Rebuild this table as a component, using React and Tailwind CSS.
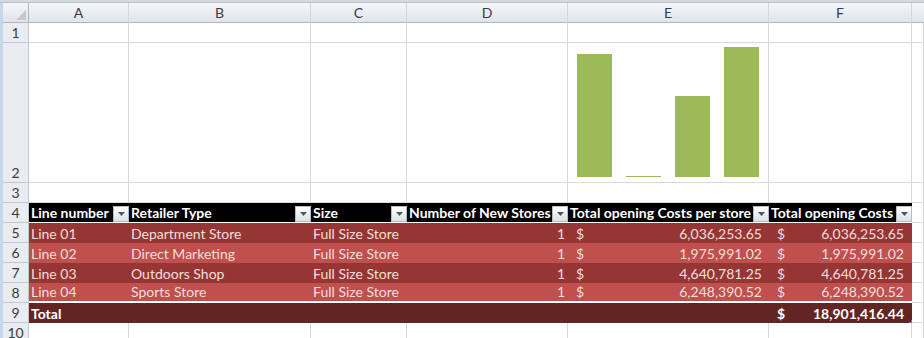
const cols = ['w-[100px]', 'w-[182px]', 'w-[96px]', 'w-[161px]', 'w-[201px]', 'w-[143px]'];
const letters = ['A', 'B', 'C', 'D', 'E', 'F'];

const rows = [
  { n: 5, line: 'Line 01', type: 'Department Store', per: '6,036,253.65', bg: 'bg-[#963634]' },
  { n: 6, line: 'Line 02', type: 'Direct Marketing', per: '1,975,991.02', bg: 'bg-[#c0504d]' },
  { n: 7, line: 'Line 03', type: 'Outdoors Shop', per: '4,640,781.25', bg: 'bg-[#963634]' },
  { n: 8, line: 'Line 04', type: 'Sports Store', per: '6,248,390.52', bg: 'bg-[#c0504d]', last: true },
];

const RowHead = ({ n, h = 'h-[20px]' }) => (
  <div className={`w-[26px] ${h} shrink-0 bg-[#e9ecf0] border-r border-b border-[#c3c8cf] flex items-end justify-center text-[14px] leading-[19px] text-[#3b3b3b]`}>
    {n}
  </div>
);

const Empty = ({ w, h = 'h-[20px]', children }) => (
  <div className={`${w} ${h} shrink-0 border-r border-b border-[#d9d9d9] relative`}>{children}</div>
);

const Filter = () => (
  <div className="w-[16px] h-[16px] shrink-0 bg-gradient-to-b from-white to-[#dce1e7] border border-[#b4bac2] flex items-center justify-center">
    <svg width="7" height="4" viewBox="0 0 7 4">
      <polygon points="0,0 7,0 3.5,4" fill="#555" />
    </svg>
  </div>
);

const HeadCell = ({ w, label }) => (
  <div className={`${w} h-[20px] shrink-0 bg-black border-b border-white flex items-end justify-between pl-[2px]`}>
    <span className="text-white font-bold text-[14px] leading-[18px] whitespace-nowrap">{label}</span>
    <Filter />
  </div>
);

const Chart = () => (
  <svg width="200" height="139" className="block">
    <rect x="9" y="11" width="35" height="123" fill="#9bbb59" />
    <rect x="58" y="133" width="35" height="1" fill="#9bbb59" />
    <rect x="107" y="53" width="35" height="81" fill="#9bbb59" />
    <rect x="156" y="4" width="35" height="130" fill="#9bbb59" />
  </svg>
);

export default function App() {
  return (
    <div className="w-[924px] h-[338px] overflow-hidden bg-white font-['Lato','Open_Sans',sans-serif] text-[14px]">
      <div className="h-[3px] bg-[#d5dae1] border-b border-[#b9c0c9]" />
      <div className="flex">
        <div className="w-[3px] shrink-0 bg-[#c6d6eb]" />
        <div className="flex-1 flex flex-col">
          {/* column letters */}
          <div className="flex h-[20px]">
            <div className="w-[26px] shrink-0 bg-gradient-to-b from-[#f4f6f8] to-[#e0e5eb] border-r border-b border-[#aeb6c0] relative">
              <svg width="10" height="10" className="absolute right-[2px] bottom-[2px]">
                <polygon points="10,0 10,10 0,10" fill="#c3c8ce" />
              </svg>
            </div>
            {letters.map((l, i) => (
              <div key={l} className={`${cols[i]} shrink-0 bg-gradient-to-b from-[#f4f6f8] to-[#e0e5eb] border-r border-b border-r-[#d2d7dd] border-b-[#aeb6c0] flex items-center justify-center text-[#3b3b3b]`}>
                {l}
              </div>
            ))}
            <div className="flex-1 bg-gradient-to-b from-[#f4f6f8] to-[#e0e5eb] border-b border-[#aeb6c0]" />
          </div>

          {/* row 1 */}
          <div className="flex">
            <RowHead n={1} />
            {cols.map((w, i) => <Empty key={i} w={w} />)}
            <Empty w="flex-1" />
          </div>

          {/* row 2 with chart */}
          <div className="flex">
            <RowHead n={2} h="h-[140px]" />
            {cols.map((w, i) => (
              <Empty key={i} w={w} h="h-[140px]">
                {i === 4 && <Chart />}
              </Empty>
            ))}
            <Empty w="flex-1" h="h-[140px]" />
          </div>

          {/* row 3 */}
          <div className="flex">
            <RowHead n={3} />
            {cols.map((w, i) => <Empty key={i} w={w} />)}
            <Empty w="flex-1" />
          </div>

          {/* row 4 table header */}
          <div className="flex">
            <RowHead n={4} />
            <HeadCell w={cols[0]} label="Line number" />
            <HeadCell w={cols[1]} label="Retailer Type" />
            <HeadCell w={cols[2]} label="Size" />
            <HeadCell w={cols[3]} label="Number of New Stores" />
            <HeadCell w={cols[4]} label="Total opening Costs per store" />
            <HeadCell w={cols[5]} label="Total opening Costs" />
            <Empty w="flex-1" />
          </div>

          {rows.map((r) => {
            const cell = `h-[20px] shrink-0 ${r.bg} ${r.last ? 'border-b-2 border-white' : ''} text-[#f4dedd] leading-[19px] whitespace-nowrap`;
            return (
              <div key={r.n} className="flex">
                <RowHead n={r.n} />
                <div className={`${cols[0]} ${cell} pl-[2px] flex items-end`}>{r.line}</div>
                <div className={`${cols[1]} ${cell} pl-[2px] flex items-end`}>{r.type}</div>
                <div className={`${cols[2]} ${cell} pl-[2px] flex items-end`}>Full Size Store</div>
                <div className={`${cols[3]} ${cell} pr-[3px] flex items-end justify-end`}>1</div>
                <div className={`${cols[4]} ${cell} pl-[8px] pr-[7px] flex items-end justify-between`}>
                  <span>$</span>
                  <span>{r.per}</span>
                </div>
                <div className={`${cols[5]} ${cell} pl-[8px] pr-[8px] flex items-end justify-between`}>
                  <span>$</span>
                  <span>{r.per}</span>
                </div>
                <Empty w="flex-1" />
              </div>
            );
          })}

          {/* row 9 total */}
          <div className="flex">
            <RowHead n={9} />
            <div className="w-[100px] h-[20px] shrink-0 bg-[#632523] pl-[2px] flex items-end text-white font-bold leading-[19px]">Total</div>
            <div className="w-[182px] h-[20px] shrink-0 bg-[#632523]" />
            <div className="w-[96px] h-[20px] shrink-0 bg-[#632523]" />
            <div className="w-[161px] h-[20px] shrink-0 bg-[#632523]" />
            <div className="w-[201px] h-[20px] shrink-0 bg-[#632523]" />
            <div className="w-[143px] h-[20px] shrink-0 bg-[#632523] pl-[8px] pr-[8px] flex items-end justify-between text-white font-bold leading-[19px] relative">
              <span>$</span>
              <span>18,901,416.44</span>
              <div className="absolute right-0 bottom-0 w-[3px] h-[3px] border-r border-b border-[#7a6fb0]" />
            </div>
            <Empty w="flex-1" />
          </div>

          {/* row 10 */}
          <div className="flex">
            <RowHead n={10} />
            {cols.map((w, i) => <Empty key={i} w={w} />)}
            <Empty w="flex-1" />
          </div>
        </div>
      </div>
    </div>
  );
}
